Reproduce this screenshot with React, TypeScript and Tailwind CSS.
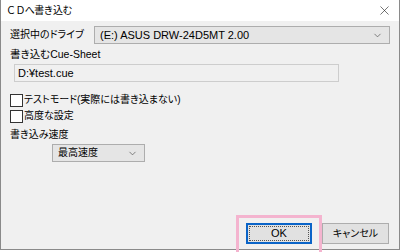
import { X, ChevronDown } from 'lucide-react';

const font = { fontFamily: '"Liberation Sans", "Noto Sans CJK JP", sans-serif' };

function Combo({ text, className, jp }: { text: string; className: string; jp?: boolean }) {
  return (
    <div className={`flex items-center justify-between border border-[#adadad] bg-[#e5e5e5] pl-[5px] pr-[6px] ${className}`}>
      <span className={`${jp ? 'text-[10px]' : 'text-[11px]'} leading-none text-black whitespace-nowrap`}>{text}</span>
      <ChevronDown className="w-[11px] h-[11px] text-[#505050]" strokeWidth={1.5} />
    </div>
  );
}

function CheckRow({ label }: { label: string }) {
  return (
    <div className="flex items-center h-[14px] gap-[1px]">
      <div className="w-[13px] h-[13px] border border-[#333] bg-white" />
      <span className="text-[10px] leading-none whitespace-nowrap">{label}</span>
    </div>
  );
}

export default function App() {
  return (
    <div className="w-[400px] h-[252px] bg-white overflow-hidden [font-feature-settings:'palt']" style={font}>
      <div className="w-[400px] h-[250px] flex flex-col border-l border-r border-b border-[#8a8a8a]">
        {/* title bar */}
        <div className="h-[21px] bg-white flex items-center justify-between pl-[5px] pr-[7px]">
          <span className="text-[10px] leading-none tracking-[-0.6px] text-black [font-feature-settings:normal]">ＣＤへ書き込む</span>
          <X className="w-[15px] h-[15px] text-[#222]" strokeWidth={1} />
        </div>
        <div className="flex-1 bg-[#f0f0f0] flex flex-col pl-[9px] pr-[9px] pt-[5px]">
          <div className="flex items-center h-[18px]">
            <span className="w-[84px] text-[10px] leading-none whitespace-nowrap">選択中のドライブ</span>
            <Combo text="(E:) ASUS DRW-24D5MT 2.00" className="flex-1 h-[18px]" />
          </div>
          <div className="mt-[3px] text-[10.5px] leading-[14px] whitespace-nowrap">書き込むCue-Sheet</div>
          <div className="mt-[3px] ml-[4px] w-[325px] h-[18px] border border-[#cdcdcd] bg-[#f0f0f0] flex items-center pl-[3px]">
            <span className="text-[11px] leading-none">D:¥test.cue</span>
          </div>
          <div className="mt-[11px] flex flex-col gap-[2px]">
            <CheckRow label="テストモード(実際には書き込まない)" />
            <CheckRow label="高度な設定" />
          </div>
          <div className="mt-[5px] text-[10px] leading-[14px] whitespace-nowrap">書き込み速度</div>
          <Combo text="最高速度" jp className="mt-[2px] ml-[42px] w-[93px] h-[18px]" />
          <div className="flex-1" />
          <div className="flex justify-end gap-[10px] pb-[5px] pr-[1px]">
            <div className="relative">
              <div className="w-[66px] h-[21px] border-2 border-[#0a64c8] bg-[#e1e1e1] flex items-center justify-center">
                <div className="absolute inset-[3px] border border-dotted border-[#555] pointer-events-none" />
                <span className="text-[11px] leading-none">OK</span>
              </div>
              <div className="absolute -left-[10px] -top-[8px] w-[86px] h-[40px] border-[3px] border-[#f4b4cf]" />
            </div>
            <div className="w-[67px] h-[21px] border border-[#adadad] bg-[#e1e1e1] flex items-center justify-center">
              <span className="text-[10px] leading-none">キャンセル</span>
            </div>
          </div>
        </div>
      </div>
    </div>
  );
}
